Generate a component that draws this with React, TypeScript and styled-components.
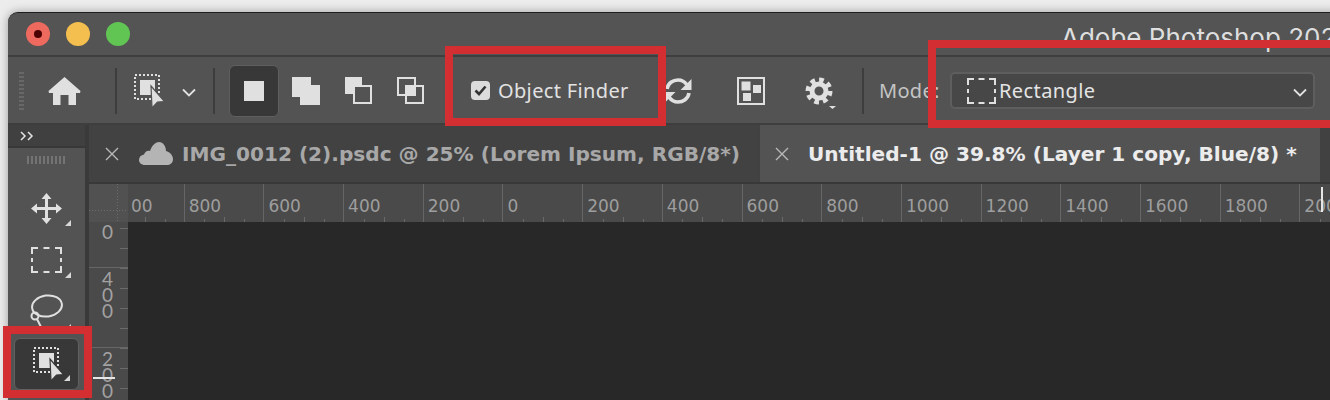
import React from "react";
import styled, { createGlobalStyle } from "styled-components";

const GlobalStyle = createGlobalStyle`
  html, body {
    margin: 0;
    width: 1330px;
    height: 400px;
    overflow: hidden;
    background: #ececec;
  }
  * { box-sizing: border-box; }
`;

const Page = styled.div`
  position: relative;
  width: 1330px;
  height: 400px;
  padding: 12px 0 0 8px;
  overflow: hidden;
`;

const Window = styled.div`
  width: 1340px;
  height: 388px;
  display: flex;
  flex-direction: column;
  background: #535353;
  border-top: 1px solid #1e1e1e;
  border-top-left-radius: 10px;
  box-shadow: 0 0 10px rgba(0, 0, 0, 0.35);
  overflow: hidden;
`;

const TitleBar = styled.div`
  height: 44px;
  flex: none;
  display: flex;
  align-items: center;
  padding-left: 18px;
  background: #545454;
  border-bottom: 2px solid #3e3e3e;
`;

const Light = styled.span<{ $color: string }>`
  width: 24px;
  height: 24px;
  margin-right: 16px;
  border-radius: 50%;
  background: ${(p) => p.$color};
  display: flex;
  align-items: center;
  justify-content: center;
`;

const LightDot = styled.span`
  width: 8px;
  height: 8px;
  border-radius: 50%;
  background: #4d0303;
`;

const Title = styled.div`
  margin-left: 915px;
  margin-top: 6px;
  font: 400 26px "Inter", "Liberation Sans", sans-serif;
  color: #dedede;
  white-space: nowrap;
`;

const OptionsBar = styled.div`
  height: 68px;
  flex: none;
  display: flex;
  align-items: center;
  padding-top: 1px;
  background: #535353;
  border-bottom: 2px solid #3e3e3e;
`;

const Slot = styled.div<{ $w: number }>`
  width: ${(p) => p.$w}px;
  flex: none;
  display: flex;
  align-items: center;
  justify-content: center;
`;

const Grip = styled.div`
  width: 5px;
  height: 38px;
  background: repeating-linear-gradient(to bottom, #686868 0 2px, transparent 2px 4px);
`;

const Divider = styled.div<{ $ml: number }>`
  width: 2px;
  height: 46px;
  flex: none;
  margin-left: ${(p) => p.$ml}px;
  background: #3d3d3d;
`;

const ActiveButton = styled.div`
  width: 50px;
  height: 52px;
  flex: none;
  margin-left: 14px;
  display: flex;
  align-items: center;
  justify-content: center;
  background: #383838;
  border: 1px solid #5f5f5f;
  border-radius: 6px;
`;

const FillSquare = styled.div`
  width: 20px;
  height: 20px;
  background: #e0e0e0;
`;

const FinderGroup = styled.label`
  width: 214px;
  flex: none;
  display: flex;
  align-items: center;
  padding-left: 35px;
  font: 400 20px "Noto Sans", sans-serif;
  letter-spacing: 0.35px;
  color: #e2e2e2;
`;

const CheckBox = styled.span`
  width: 19px;
  height: 19px;
  margin-right: 8px;
  flex: none;
  display: flex;
  align-items: center;
  justify-content: center;
  background: #dcdcdc;
  border-radius: 4px;
`;

const ModeLabel = styled.div`
  width: 71px;
  margin-left: 15px;
  flex: none;
  font: 400 20px "Noto Sans", sans-serif;
  letter-spacing: 0.3px;
  color: #c4c4c4;
  white-space: nowrap;
`;

const SelectBox = styled.div`
  width: 365px;
  height: 37px;
  flex: none;
  display: flex;
  align-items: center;
  padding: 0 6px 0 15px;
  background: #474747;
  border: 2px solid #5e5e5e;
  border-radius: 5px;
  font: 400 20px "Noto Sans", sans-serif;
  letter-spacing: 0.4px;
  color: #e4e4e4;
`;

const SelectText = styled.span`
  margin-left: 3px;
  flex: 1;
`;

const Workspace = styled.div`
  flex: 1;
  min-height: 0;
  display: flex;
  background: #3a3a3a;
`;

const ToolPanel = styled.div`
  width: 77px;
  flex: none;
  display: flex;
  flex-direction: column;
  align-items: center;
  background: #535353;
`;

const CollapseBar = styled.div`
  width: 100%;
  height: 23px;
  flex: none;
  padding: 0 0 0 12px;
  display: flex;
  align-items: center;
  background: #404040;
  border-bottom: 2px solid #383838;
`;

const ToolGrip = styled.div`
  width: 39px;
  height: 8px;
  flex: none;
  margin: 8px 0 18px;
  background: repeating-linear-gradient(to right, #747474 0 2px, transparent 2px 4px);
`;

const Tool = styled.div<{ $active?: boolean; $marker?: boolean }>`
  position: relative;
  width: 65px;
  height: 52px;
  flex: none;
  display: flex;
  align-items: center;
  justify-content: center;
  padding-left: ${(p) => (p.$active ? 4 : 0)}px;
  background: ${(p) => (p.$active ? "#383838" : "transparent")};
  border: ${(p) => (p.$active ? "1px solid #606060" : "none")};
  border-radius: 6px;

  &::after {
    content: "";
    display: ${(p) => (p.$marker ? "block" : "none")};
    position: absolute;
    right: 8px;
    bottom: 8px;
    border-left: 6px solid transparent;
    border-bottom: 6px solid #d8d8d8;
  }
`;

const DocArea = styled.div`
  flex: 1;
  min-width: 0;
  margin-left: 4px;
  display: flex;
  flex-direction: column;
`;

const TabBar = styled.div`
  height: 59px;
  flex: none;
  display: flex;
  background: #414141;
  border-bottom: 2px solid #383838;
`;

const Tab = styled.div<{ $active?: boolean; $w: number }>`
  width: ${(p) => p.$w}px;
  flex: none;
  display: flex;
  align-items: center;
  padding-left: ${(p) => (p.$active ? 15 : 16)}px;
  margin-left: ${(p) => (p.$active ? 2 : 0)}px;
  background: ${(p) => (p.$active ? "#535353" : "#424242")};
  font: 700 20.1px "DejaVu Sans", sans-serif;
  color: ${(p) => (p.$active ? "#ececec" : "#a8a8a8")};
  white-space: nowrap;
  overflow: hidden;
`;

const TabClose = styled.span<{ $active?: boolean }>`
  width: 14px;
  height: 14px;
  flex: none;
  margin-right: ${(p) => (p.$active ? 19 : 20)}px;
  display: flex;
`;

const Cloud = styled.span`
  display: flex;
  margin-right: 9px;
`;

const HRulerRow = styled.div`
  height: 38px;
  flex: none;
  display: flex;
  background: #4a4a4a;
`;

const RulerCorner = styled.div`
  position: relative;
  z-index: 1;
  width: 39px;
  flex: none;
  background:
    repeating-linear-gradient(to right, #6c6c6c 0 1px, transparent 1px 3px) 0 26px / 100% 1px no-repeat,
    repeating-linear-gradient(to bottom, #6c6c6c 0 1px, transparent 1px 3px) 28px 0 / 1px 100% no-repeat,
    #515151;
`;

const HTrack = styled.div`
  flex: 1;
  min-width: 0;
  display: flex;
  overflow: hidden;
`;

const HCell = styled.div<{ $first?: boolean }>`
  width: 79.7px;
  height: 100%;
  flex: none;
  margin-left: ${(p) => (p.$first ? -24 : 0)}px;
  padding: 10px 0 0 ${(p) => (p.$first ? 26 : 4)}px;
  border-left: 1px solid #666;
  font: 400 17px/24px "DejaVu Sans", sans-serif;
  color: #9e9e9e;
  white-space: nowrap;
  background:
    linear-gradient(#6a6a6a, #6a6a6a) 39.5px 100% / 1px 5px no-repeat,
    linear-gradient(#6a6a6a, #6a6a6a) 19.5px 100% / 1px 3px no-repeat,
    linear-gradient(#6a6a6a, #6a6a6a) 59.5px 100% / 1px 3px no-repeat;
`;

const RulerBody = styled.div`
  flex: 1;
  min-height: 0;
  display: flex;
`;

const VTrack = styled.div`
  width: 39px;
  flex: none;
  overflow: hidden;
  background: #4a4a4a;
`;

const VCell = styled.div<{ $first?: boolean }>`
  height: 80px;
  margin-top: ${(p) => (p.$first ? -35 : 0)}px;
  padding: ${(p) => (p.$first ? 36 : 3)}px 0 0 13px;
  border-top: 1px solid #666;
  display: flex;
  flex-direction: column;
  font: 400 19px/16px "Lato", sans-serif;
  color: #a2a2a2;
  background: linear-gradient(#6a6a6a 1px, transparent 1px) right 0 / 8px 20px repeat-y;
`;

const Canvas = styled.div`
  flex: 1;
  background: #282828;
`;

const RedBox = styled.div<{ $l: number; $t: number; $w: number; $h: number }>`
  position: absolute;
  left: ${(p) => p.$l}px;
  top: ${(p) => p.$t}px;
  width: ${(p) => p.$w}px;
  height: ${(p) => p.$h}px;
  border: 8px solid #d32f33;
`;

const RulerMark = styled.div<{ $l: number; $t: number; $w: number; $h: number }>`
  position: absolute;
  left: ${(p) => p.$l}px;
  top: ${(p) => p.$t}px;
  width: ${(p) => p.$w}px;
  height: ${(p) => p.$h}px;
  background: #e6e6e6;
`;

const ICON = "#e0e0e0";

const SelectSubject = ({ bg }: { bg: string }) => (
  <svg width="32" height="34" viewBox="0 0 32 34" fill="none">
    <rect x="1" y="1" width="24" height="24" stroke={ICON} strokeWidth="2" strokeDasharray="2 2" />
    <rect x="6" y="6" width="15" height="15" fill={ICON} />
    <path d="M17 12 L30.5 27.5 L23.5 28 L18 34 Z" fill={ICON} stroke={bg} strokeWidth="1.2" />
  </svg>
);

const Chevron = () => (
  <svg width="14" height="13" viewBox="0 -4 14 13" fill="none">
    <path d="M1 1.5 L7 7.5 L13 1.5" stroke={ICON} strokeWidth="1.8" />
  </svg>
);

const HomeIcon = () => (
  <svg width="33" height="30" viewBox="0 0 33 30">
    <path d="M16.5 1 L32.5 15 L32 17 L28 17 L28 29 L20.5 29 L20.5 19 L12.5 19 L12.5 29 L5 29 L5 17 L1 17 L.5 15 Z" fill={ICON} />
  </svg>
);

const UnionIcon = () => (
  <svg width="28" height="28" viewBox="0 0 28 28">
    <path d="M0 0 H19 V8 H28 V28 H8 V20 H0 Z" fill={ICON} />
  </svg>
);

const SubtractIcon = () => (
  <svg width="27" height="27" viewBox="0 0 27 27" fill="none">
    <path d="M0 0 H17 V8 H8 V17 H0 Z" fill={ICON} />
    <rect x="9" y="9" width="17" height="17" stroke={ICON} strokeWidth="2" />
  </svg>
);

const IntersectIcon = () => (
  <svg width="27" height="27" viewBox="0 0 27 27" fill="none">
    <rect x="1" y="1" width="17" height="17" stroke={ICON} strokeWidth="2" />
    <rect x="9" y="9" width="17" height="17" stroke={ICON} strokeWidth="2" />
    <rect x="9" y="9" width="9" height="9" fill={ICON} />
  </svg>
);

const CheckMark = () => (
  <svg width="13" height="11" viewBox="0 0 13 11" fill="none">
    <path d="M1.5 5.5 L5 9 L11.5 1.5" stroke="#333" strokeWidth="2.6" />
  </svg>
);

const RefreshIcon = () => (
  <svg width="28" height="26" viewBox="0 0 28 26" fill="none">
    <path d="M3 11 C4 5 9 2 14 2 C18 2 21 4 23 7" stroke={ICON} strokeWidth="3.6" />
    <path d="M27.5 1 L27.5 12 L16.5 12 Z" fill={ICON} />
    <path d="M25 15 C24 21 19 24 14 24 C10 24 7 22 5 19" stroke={ICON} strokeWidth="3.6" />
    <path d="M.5 25 L.5 14 L11.5 14 Z" fill={ICON} />
  </svg>
);

const TileIcon = () => (
  <svg width="28" height="28" viewBox="0 0 28 28" fill="none">
    <rect x="1" y="1" width="26" height="26" stroke={ICON} strokeWidth="2" />
    <rect x="4.5" y="4.5" width="9" height="9" fill={ICON} />
    <rect x="16" y="8" width="8" height="8" fill={ICON} />
    <rect x="6" y="16" width="8" height="8" fill={ICON} />
  </svg>
);

const GearIcon = () => (
  <svg width="34" height="40" viewBox="-4 -7 34 40" fill="none">
    <circle cx="13" cy="13" r="7" stroke={ICON} strokeWidth="5" />
    <circle cx="13" cy="13" r="11" stroke={ICON} strokeWidth="5" strokeDasharray="4.6 4" />
    <path d="M23 28 H30 L26.5 31 Z" fill={ICON} />
  </svg>
);

const DashedRect = ({ w, h }: { w: number; h: number }) => (
  <svg width={w} height={h} viewBox={`0 0 ${w} ${h}`} fill="none">
    <path
      d={`M1 7 V1 H7 M${w / 2 - 3} 1 H${w / 2 + 3} M${w - 7} 1 H${w - 1} V7 M${w - 1} ${h / 2 - 2} V${h / 2 + 2} M${w - 1} ${h - 7} V${h - 1} H${w - 7} M${w / 2 + 3} ${h - 1} H${w / 2 - 3} M7 ${h - 1} H1 V${h - 7} M1 ${h / 2 + 2} V${h / 2 - 2}`}
      stroke={ICON}
      strokeWidth="2"
    />
  </svg>
);

const MoveIcon = () => (
  <svg width="31" height="31" viewBox="0 0 31 31">
    <path d="M15.5 0 L20.5 6 H17 V14 H25 V10.5 L31 15.5 L25 20.5 V17 H17 V25 H20.5 L15.5 31 L10.5 25 H14 V17 H6 V20.5 L0 15.5 L6 10.5 V14 H14 V6 H10.5 Z" fill={ICON} />
  </svg>
);

const LassoIcon = () => (
  <svg width="33" height="36" viewBox="0 0 33 36" fill="none">
    <ellipse cx="17" cy="12" rx="15" ry="10.5" transform="rotate(-8 17 12)" stroke={ICON} strokeWidth="2" />
    <circle cx="5" cy="22" r="3.5" stroke={ICON} strokeWidth="2" />
    <path d="M7 25 L12 35" stroke={ICON} strokeWidth="2" />
  </svg>
);

const CloseIcon = () => (
  <svg width="14" height="14" viewBox="0 0 14 14" fill="none">
    <path d="M1 1 L13 13 M13 1 L1 13" stroke="#b8b8b8" strokeWidth="1.4" />
  </svg>
);

const CloudIcon = () => (
  <svg width="34" height="23" viewBox="0 0 34 23">
    <path d="M6 23 C2 23 0 20.5 0 18 C0 15 2 13 5 12.5 C6 9 9 8 11 9 C13 3 17 0 20 0 C24 0 27 4 27 9 C31 10 34 13.5 34 17 C34 21 31 23 28 23 Z" fill="#b4b4b4" />
  </svg>
);

const DoubleChevron = () => (
  <svg width="14" height="10" viewBox="0 0 14 10" fill="none">
    <path d="M1 1 L5 5 L1 9 M8 1 L12 5 L8 9" stroke="#e4e4e4" strokeWidth="1.5" />
  </svg>
);

const hLabels = ["00", "800", "600", "400", "200", "0", "200", "400", "600", "800", "1000", "1200", "1400", "1600", "1800", "2000"];
const vLabels = ["0", "400", "200"];

export default function App() {
  return (
    <Page>
      <GlobalStyle />
      <Window>
        <TitleBar>
          <Light $color="#ee6a5f">
            <LightDot />
          </Light>
          <Light $color="#f5bf4f" />
          <Light $color="#61c554" />
          <Title>Adobe Photoshop 2021</Title>
        </TitleBar>

        <OptionsBar>
          <Slot $w={26}>
            <Grip />
          </Slot>
          <Slot $w={60}>
            <HomeIcon />
          </Slot>
          <Divider $ml={21} />
          <Slot $w={65}>
            <SelectSubject bg="#535353" />
          </Slot>
          <Slot $w={14}>
            <Chevron />
          </Slot>
          <Divider $ml={17} />
          <ActiveButton>
            <FillSquare />
          </ActiveButton>
          <Slot $w={54}>
            <UnionIcon />
          </Slot>
          <Slot $w={51}>
            <SubtractIcon />
          </Slot>
          <Slot $w={52}>
            <IntersectIcon />
          </Slot>
          <FinderGroup>
            <CheckBox>
              <CheckMark />
            </CheckBox>
            Object Finder
          </FinderGroup>
          <Slot $w={56}>
            <RefreshIcon />
          </Slot>
          <Slot $w={90}>
            <TileIcon />
          </Slot>
          <Slot $w={46}>
            <GearIcon />
          </Slot>
          <Divider $ml={20} />
          <ModeLabel>Mode:</ModeLabel>
          <SelectBox>
            <DashedRect w={29} h={26} />
            <SelectText>Rectangle</SelectText>
            <Chevron />
          </SelectBox>
        </OptionsBar>

        <Workspace>
          <ToolPanel>
            <CollapseBar>
              <DoubleChevron />
            </CollapseBar>
            <ToolGrip />
            <Tool $marker>
              <MoveIcon />
            </Tool>
            <Tool $marker>
              <DashedRect w={31} h={26} />
            </Tool>
            <Tool $marker>
              <LassoIcon />
            </Tool>
            <Tool $active $marker>
              <SelectSubject bg="#383838" />
            </Tool>
          </ToolPanel>

          <DocArea>
            <TabBar>
              <Tab $w={669}>
                <TabClose>
                  <CloseIcon />
                </TabClose>
                <Cloud>
                  <CloudIcon />
                </Cloud>
                IMG_0012 (2).psdc @ 25% (Lorem Ipsum, RGB/8*)
              </Tab>
              <Tab $w={560} $active>
                <TabClose $active>
                  <CloseIcon />
                </TabClose>
                Untitled-1 @ 39.8% (Layer 1 copy, Blue/8) *
              </Tab>
            </TabBar>
            <HRulerRow>
              <RulerCorner />
              <HTrack>
                {hLabels.map((label, i) => (
                  <HCell key={i} $first={i === 0}>
                    {label}
                  </HCell>
                ))}
              </HTrack>
            </HRulerRow>
            <RulerBody>
              <VTrack>
                {vLabels.map((label, i) => (
                  <VCell key={i} $first={i === 0}>
                    {label.split("").map((digit, j) => (
                      <span key={j}>{digit}</span>
                    ))}
                  </VCell>
                ))}
              </VTrack>
              <Canvas />
            </RulerBody>
          </DocArea>
        </Workspace>
      </Window>

      <RulerMark $l={93} $t={377} $w={22} $h={2} />
      <RulerMark $l={1321} $t={187} $w={2} $h={25} />
      <RedBox $l={445} $t={46} $w={221} $h={80} />
      <RedBox $l={928} $t={40} $w={420} $h={88} />
      <RedBox $l={3} $t={326} $w={89} $h={72} />
    </Page>
  );
}
